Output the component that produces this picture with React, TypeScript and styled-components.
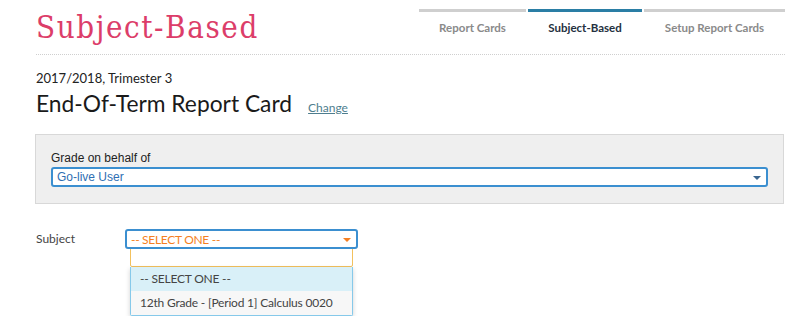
import React from "react";
import styled, { createGlobalStyle } from "styled-components";

const Global = createGlobalStyle`
  html, body { margin: 0; padding: 0; background: #fff; }
  body { font-family: Lato, "Open Sans", Arial, sans-serif; color: #222; }
  * { box-sizing: border-box; }
`;

const Page = styled.div`
  width: 809px;
  padding: 0 24px 0 35px;
`;

const Header = styled.header`
  display: flex;
  justify-content: space-between;
  align-items: flex-start;
  height: 55px;
  margin-left: 1px;
  border-bottom: 1px dotted #cfcfcf;
`;

const Brand = styled.h1`
  margin: 9px 0 0;
  font-family: "DejaVu Serif Condensed", "DejaVu Serif", serif;
  font-stretch: condensed;
  font-weight: normal;
  font-size: 31px;
  line-height: 36px;
  color: #dc3d69;
  letter-spacing: 1.6px;
`;

const Tabs = styled.nav`
  display: flex;
  gap: 2px;
  margin-top: 9px;
`;

const Tab = styled.a<{ $active?: boolean; $w: number }>`
  display: block;
  width: ${(p) => p.$w}px;
  border-top: 3px solid ${(p) => (p.$active ? "#2a7ea5" : "#cfcfcf")};
  padding-top: 9px;
  text-align: center;
  font-family: Lato, Arial, sans-serif;
  font-weight: 700;
  font-size: 11.5px;
  color: ${(p) => (p.$active ? "#243040" : "#8a8a8a")};
`;

const Term = styled.div`
  margin: 15px 0 0 1px;
  font-size: 13px;
  color: #222;
`;

const TitleRow = styled.div`
  display: flex;
  align-items: baseline;
  gap: 16px;
  margin: 3px 0 0 1px;
`;

const Title = styled.h2`
  margin: 0;
  font-weight: 400;
  font-size: 22.8px;
  line-height: 28px;
  color: #1a1a1a;
`;

const ChangeLink = styled.a`
  font-size: 12px;
  color: #4d7d8e;
  text-decoration: underline;
`;

const Panel = styled.section`
  margin-top: 17px;
  width: 749px;
  height: 70px;
  background: #efefef;
  border: 1px solid #d8d8d8;
  padding: 16px 15px 0 15px;
`;

const PanelLabel = styled.div`
  font-family: "Liberation Sans Narrow", "Liberation Sans", Arial, sans-serif;
  font-size: 12px;
  color: #222;
  margin-bottom: 2px;
`;

const Select = styled.div<{ $w: number; $tone: "blue" | "orange" }>`
  position: relative;
  width: ${(p) => p.$w}px;
  height: 20px;
  border: 2px solid #3b8fd0;
  border-radius: 3px;
  background: #fff;
  display: flex;
  align-items: center;
  padding-left: 4px;
  font-size: 12px;
  letter-spacing: ${(p) => (p.$tone === "blue" ? "0" : "-0.3px")};
  color: ${(p) => (p.$tone === "blue" ? "#2f6fb3" : "#f57f22")};
  font-family: ${(p) =>
    p.$tone === "blue"
      ? `"Liberation Sans Narrow", "Liberation Sans", Arial, sans-serif`
      : `Lato, Arial, sans-serif`};
`;

const Arrow = styled.span<{ $color: string }>`
  position: absolute;
  right: 5px;
  top: 7px;
  width: 0;
  height: 0;
  border-left: 4px solid transparent;
  border-right: 4px solid transparent;
  border-top: 4px solid ${(p) => p.$color};
`;

const SubjectRow = styled.div`
  display: flex;
  align-items: flex-start;
  margin: 25px 0 0 1px;
`;

const SubjectLabel = styled.div`
  width: 89px;
  font-size: 12px;
  color: #444;
  padding-top: 2px;
`;

const Combo = styled.div`
  display: flex;
  flex-direction: column;
  width: 233px;
`;

const DropPanel = styled.div`
  margin: -2px 0 0 5px;
  width: 223px;
`;

const Search = styled.div`
  height: 20px;
  border: 1px solid #f3c15d;
  border-radius: 2px;
  background: #fff;
`;

const List = styled.ul`
  margin: 0;
  padding: 0;
  list-style: none;
  border: 1px solid #86c9ea;
  border-top: none;
  border-radius: 0 0 2px 2px;
  box-shadow: 0 2px 5px rgba(0, 0, 0, 0.18);
  overflow: hidden;
`;

const Option = styled.li<{ $hl?: boolean }>`
  height: 24px;
  line-height: 24px;
  padding-left: 9px;
  font-size: 12px;
  letter-spacing: -0.2px;
  color: #444;
  background: ${(p) => (p.$hl ? "#d9f0f8" : "#f7f7f7")};
  white-space: nowrap;
`;

export default function App() {
  return (
    <>
      <Global />
      <Page>
        <Header>
          <Brand>Subject-Based</Brand>
          <Tabs>
            <Tab $w={107}>Report Cards</Tab>
            <Tab $w={114} $active>
              Subject-Based
            </Tab>
            <Tab $w={141}>Setup Report Cards</Tab>
          </Tabs>
        </Header>
        <Term>2017/2018, Trimester 3</Term>
        <TitleRow>
          <Title>End-Of-Term Report Card</Title>
          <ChangeLink>Change</ChangeLink>
        </TitleRow>
        <Panel>
          <PanelLabel>Grade on behalf of</PanelLabel>
          <Select $w={717} $tone="blue">
            Go-live User
            <Arrow $color="#3a6690" />
          </Select>
        </Panel>
        <SubjectRow>
          <SubjectLabel>Subject</SubjectLabel>
          <Combo>
            <Select $w={233} $tone="orange">
              -- SELECT ONE --
              <Arrow $color="#f57f22" />
            </Select>
            <DropPanel>
              <Search />
              <List>
                <Option $hl>-- SELECT ONE --</Option>
                <Option>12th Grade - [Period 1] Calculus 0020</Option>
              </List>
            </DropPanel>
          </Combo>
        </SubjectRow>
      </Page>
    </>
  );
}
